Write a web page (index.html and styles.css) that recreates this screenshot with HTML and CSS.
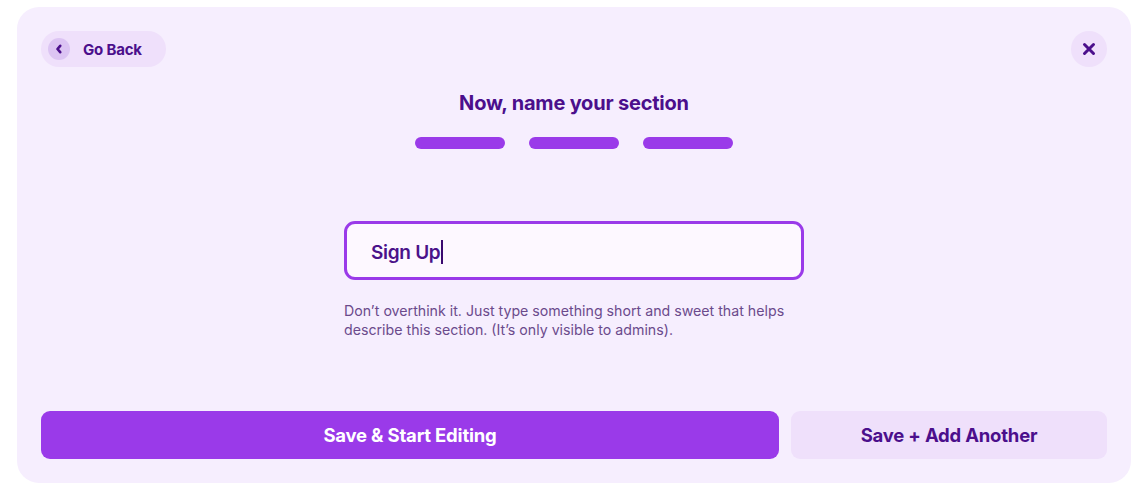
FILE: index.html
```html
<!DOCTYPE html>
<html lang="en">
<head>
    <meta charset="UTF-8">
    <title>Name your section</title>
    <link rel="stylesheet" href="styles.css">
</head>
<body>

<div class="panel">
    <div class="panel-header">
        <button class="back-button">
            <span class="back-icon">
                <svg width="10" height="10" viewBox="0 0 10 10"><path d="M6.2 1.8 L3.5 5 L6.2 8.2" fill="none" stroke="#4b0f8c" stroke-width="2.6" stroke-linecap="round" stroke-linejoin="round"/></svg>
            </span>
            Go Back
        </button>
        <button class="close-button" aria-label="Close">
            <svg width="14" height="14" viewBox="0 0 14 14"><path d="M2.5 2.5 L11.5 11.5 M11.5 2.5 L2.5 11.5" stroke="#4b0f8c" stroke-width="3" stroke-linecap="round"/></svg>
        </button>
    </div>

    <h2 class="title">Now, name your section</h2>

    <div class="steps">
        <span class="step"></span>
        <span class="step"></span>
        <span class="step"></span>
    </div>

    <div class="field">
        <div class="name-input">Sign Up<span class="caret"></span></div>
        <p class="hint">Don’t overthink it. Just type something short and sweet that helps describe this section. (It’s only visible to admins).</p>
    </div>

    <div class="actions">
        <button class="button primary">Save &amp; Start Editing</button>
        <button class="button secondary">Save + Add Another</button>
    </div>
</div>

</body>
</html>
```

FILE: styles.css
```css
:root {
    --purple: #9a3ae9;
    --ink: #4b0f8c;
    --panel-bg: #f6eefe;
    --soft: #efe0fb;
}
body {
    margin: 0;
    background-color: #fff;
    font-family: Inter, "Noto Sans", sans-serif;
    color: var(--ink);
}
.panel {
    box-sizing: border-box;
    width: 1114px;
    height: 476px;
    margin: 7px 0 0 17px;
    padding: 24px;
    background-color: var(--panel-bg);
    border-radius: 22px;
    display: flex;
    flex-direction: column;
}
.panel-header {
    display: flex;
    justify-content: space-between;
    align-items: center;
    height: 36px;
}
button {
    font-family: inherit;
    border: none;
    cursor: pointer;
}
.back-button {
    display: flex;
    align-items: center;
    gap: 13px;
    height: 36px;
    width: 125px;
    padding: 0 7px;
    border-radius: 18px;
    background-color: var(--soft);
    color: var(--ink);
    font-size: 15px;
    font-weight: 700;
    letter-spacing: -0.2px;
}
.back-icon {
    display: flex;
    align-items: center;
    justify-content: center;
    width: 22px;
    height: 22px;
    border-radius: 50%;
    background-color: #dcc4f3;
}
.close-button {
    display: flex;
    align-items: center;
    justify-content: center;
    width: 36px;
    height: 36px;
    padding: 0;
    border-radius: 50%;
    background-color: var(--soft);
}
.title {
    margin: 24px 0 0;
    text-align: center;
    font-size: 20px;
    line-height: 24px;
    font-weight: 700;
    letter-spacing: -0.2px;
}
.steps {
    display: flex;
    justify-content: center;
    gap: 24px;
    margin-top: 22px;
}
.step {
    width: 90px;
    height: 12px;
    border-radius: 6px;
    background-color: var(--purple);
}
.field {
    width: 460px;
    margin: 72px auto 0;
}
.name-input {
    box-sizing: border-box;
    height: 59px;
    padding: 3px 24px 0;
    display: flex;
    align-items: center;
    border: 3px solid var(--purple);
    border-radius: 11px;
    background-color: #fdf8ff;
    font-size: 19px;
    font-weight: 600;
    letter-spacing: -0.3px;
    color: #4a128a;
}
.caret {
    display: inline-block;
    width: 1.5px;
    height: 24px;
    margin-left: 1px;
    background-color: #3a0a70;
}
.hint {
    margin: 21px 0 0;
    font-size: 14.2px;
    line-height: 19px;
    color: #6b4a8c;
}
.actions {
    display: flex;
    gap: 12px;
    margin-top: auto;
}
.button {
    height: 48px;
    border-radius: 9px;
    font-size: 18.5px;
    font-weight: 700;
    letter-spacing: -0.2px;
}
.primary {
    flex: 1;
    background-color: var(--purple);
    color: #fff;
}
.secondary {
    width: 316px;
    background-color: var(--soft);
    color: var(--ink);
}
```
